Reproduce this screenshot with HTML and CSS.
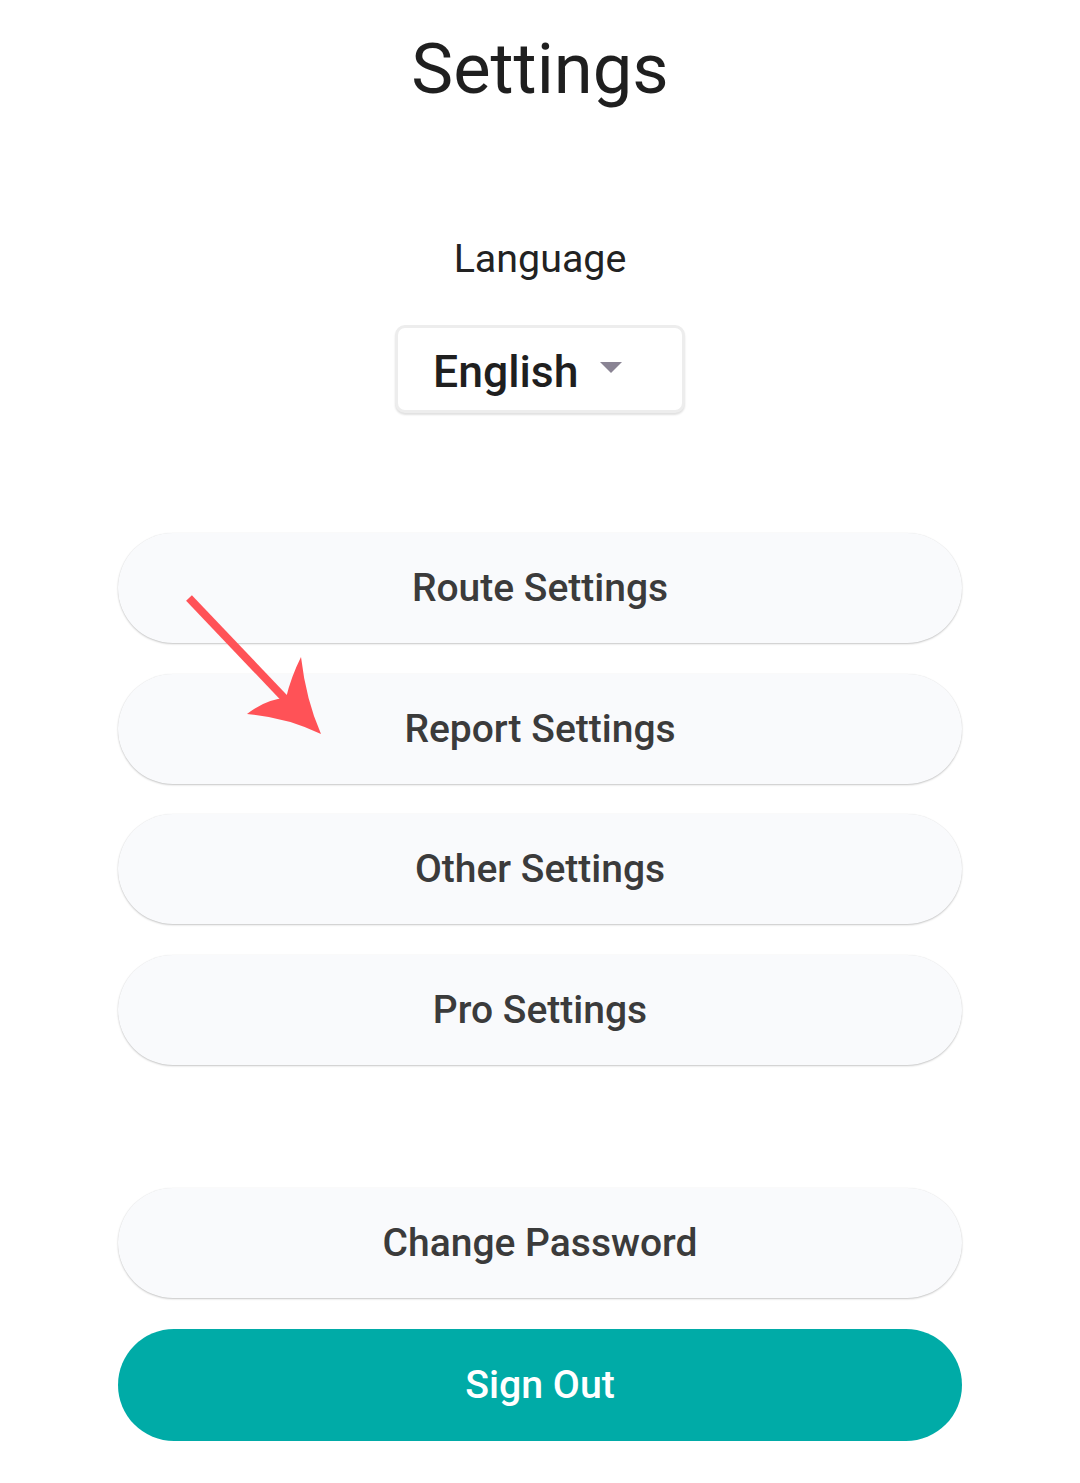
FILE: index.html
```html
<!DOCTYPE html>
<html lang="en">
<head>
<meta charset="utf-8">
<title>Settings</title>
<link rel="stylesheet" href="styles.css">
</head>
<body>
<main class="page">
  <h1 class="title">Settings</h1>
  <section class="language">
    <div class="language-label">Language</div>
    <div class="select">
      <span class="select-value">English</span>
      <span class="select-caret"></span>
    </div>
  </section>
  <nav class="menu">
    <button class="pill">Route Settings</button>
    <button class="pill">Report Settings</button>
    <button class="pill">Other Settings</button>
    <button class="pill">Pro Settings</button>
  </nav>
  <div class="account">
    <button class="pill">Change Password</button>
    <button class="pill pill-primary">Sign Out</button>
  </div>
  <svg class="annotation" width="1080" height="1483" viewBox="0 0 1080 1483" xmlns="http://www.w3.org/2000/svg">
    <line x1="189" y1="598" x2="288" y2="702" stroke="#ff5257" stroke-width="8"/>
    <path d="M321,734 Q286,717 247,714 Q266,699 286,698 Q291,677 301,657 Q306,700 321,734 Z" fill="#ff5257"/>
  </svg>
</main>
</body>
</html>
```
FILE: styles.css
```css
* { box-sizing: border-box; }
html, body { margin: 0; padding: 0; background: #ffffff; }
body { font-family: Roboto, "Noto Sans", "Liberation Sans", sans-serif; }
.page {
  position: relative;
  width: 1080px;
  min-height: 1483px;
  display: flex;
  flex-direction: column;
  align-items: center;
  padding-top: 28px;
}
.title {
  margin: 0;
  font-size: 70.5px;
  line-height: 82px;
  font-weight: 400;
  color: #1f1f1f;
}
.language {
  margin-top: 126px;
  display: flex;
  flex-direction: column;
  align-items: center;
}
.language-label {
  font-size: 39.4px;
  line-height: 45px;
  color: #222222;
}
.select {
  margin-top: 44px;
  height: 88px;
  width: 290px;
  display: flex;
  align-items: center;
  padding-left: 35px;
  padding-top: 5px;
  border: 3px solid #ededed;
  border-radius: 10px;
  box-shadow: 0 2px 2px rgba(0,0,0,0.12);
  background: #ffffff;
}
.select-value {
  font-size: 44.5px;
  font-weight: 500;
  color: #1f1f1f;
}
.select-caret {
  margin-left: 22px;
  margin-top: -8px;
  width: 0;
  height: 0;
  border-left: 11px solid transparent;
  border-right: 11px solid transparent;
  border-top: 11px solid #8a8494;
}
.menu {
  margin-top: 120px;
  display: flex;
  flex-direction: column;
  gap: 30.5px;
}
.account {
  margin-top: 123px;
  display: flex;
  flex-direction: column;
  gap: 31px;
}
.pill {
  width: 844px;
  height: 110px;
  border: none;
  border-radius: 56px;
  background: #f9fafc;
  box-shadow: 0 1px 2px rgba(0,0,0,0.22), 0 0 1px rgba(0,0,0,0.08);
  font-family: Roboto, "Noto Sans", "Liberation Sans", sans-serif;
  font-size: 39px;
  font-weight: 500;
  color: #3b3b3b;
  padding: 0;
  cursor: pointer;
}
.pill-primary {
  height: 112px;
  background: #00aba7;
  color: #ffffff;
  box-shadow: none;
  font-size: 39.3px;
}
.annotation {
  position: absolute;
  left: 0;
  top: 0;
  pointer-events: none;
}
```
